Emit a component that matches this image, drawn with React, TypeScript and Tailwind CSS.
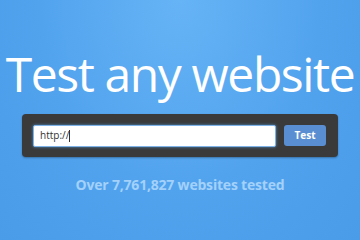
import React from 'react';

export default function App() {
  return (
    <div
      className="w-[360px] h-[240px] overflow-hidden flex flex-col items-center bg-[radial-gradient(ellipse_at_50%_0%,#66b4f6_0%,#52a3ee_55%,#4a9be8_100%)]"
      style={{ fontFamily: '"Open Sans", "Noto Sans", sans-serif' }}
    >
      <h1 className="mt-[41px] text-[48px] leading-[66px] text-white tracking-[-1.4px] whitespace-nowrap">
        Test any website
      </h1>
      <div className="mt-[7px] w-[316px] h-[43px] rounded-[4px] bg-[#3a3a3a] flex items-center pl-[11px] pr-[12px] gap-[8px] shadow-[0_1px_2px_rgba(0,0,0,0.3)]">
        <div className="w-[243px] h-[22px] bg-white rounded-[2px] border border-[#7fb3e8] shadow-[0_0_3px_rgba(82,168,236,0.8)] flex items-center pl-[6px] text-[10px] text-[#333]">
          http://<span className="w-px h-[12px] bg-[#333]" />
        </div>
        <button className="w-[42px] h-[21px] rounded-[3px] bg-[#5a8ed2] text-white text-[10px] font-bold flex items-center justify-center">
          Test
        </button>
      </div>
      <p className="mt-[17px] text-[14px] font-bold text-[#a3d1fa] tracking-[-0.2px]">
        Over 7,761,827 websites tested
      </p>
    </div>
  );
}
